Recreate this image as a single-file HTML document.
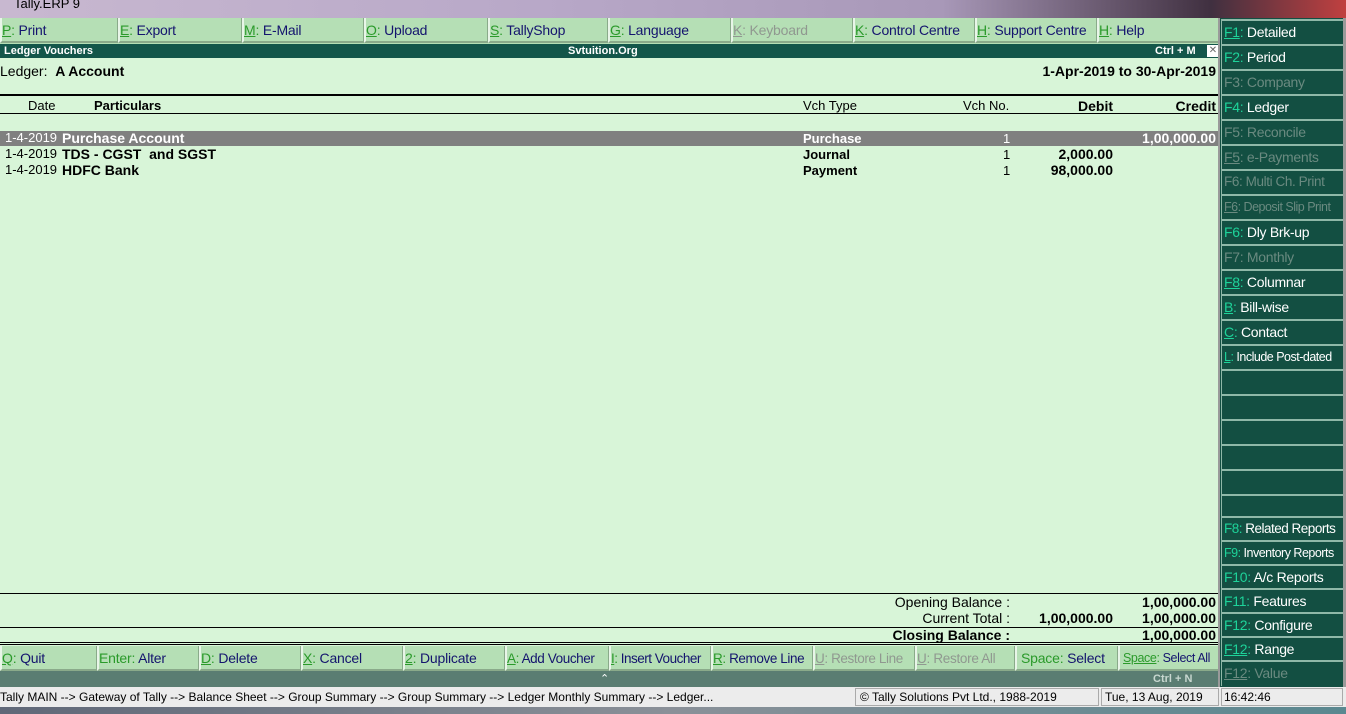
<!DOCTYPE html>
<html><head><meta charset="utf-8"><style>
*{margin:0;padding:0;box-sizing:border-box}
body{width:1346px;height:714px;overflow:hidden;position:relative;background:#d8f5d8;font-family:"Liberation Sans",Arial,sans-serif;font-size:13px;color:#000}
.a{position:absolute;white-space:nowrap}
.tb{position:absolute;height:25px;background:#b5dfb5;border-left:2px solid #e8f5e8;border-right:1px solid #8aaa8a;border-bottom:2px solid #8aaa8a;color:#14146e;font-size:14px;line-height:25px;padding-left:0px;white-space:nowrap;overflow:hidden;letter-spacing:-0.2px}
.tb b{color:#2a9a2a;font-weight:normal;text-decoration:underline}
.tb.g{color:#909890}.tb.g b{color:#909890}
.rp{position:absolute;left:1221px;width:122px;background:#134f42;border-top:2px solid #8fb8a8;border-left:1px solid #8fb8a8;color:#fff;font-size:14px;line-height:22px;padding-left:2px;white-space:nowrap;overflow:hidden;letter-spacing:-0.3px}
.rp b{color:#1ed39a;font-weight:normal}
.rp.g{color:#6a8a80}.rp.g b{color:#6a8a80}
.bold{font-weight:bold}
</style></head><body>
<div class="a" style="left:0;top:0;width:1346px;height:18px;background:linear-gradient(90deg,#c8b8d0,#b8a8c8 40%,#a898b8 70%,#403040 90%,#c04040);"></div>
<div class="a" style="left:14px;top:-3px;font-size:13px;line-height:14px;color:#000">Tally.ERP 9</div>
<div class="a" style="left:0;top:18px;width:1220px;height:26px;background:#b5dfb5"></div>
<div class="tb" style="left:0;top:18px;width:118px"><b>P</b><b style="text-decoration:none">:</b> Print</div>
<div class="tb" style="left:118px;top:18px;width:124px"><b>E</b><b style="text-decoration:none">:</b> Export</div>
<div class="tb" style="left:242px;top:18px;width:122px"><b>M</b><b style="text-decoration:none">:</b> E-Mail</div>
<div class="tb" style="left:364px;top:18px;width:124px"><b>O</b><b style="text-decoration:none">:</b> Upload</div>
<div class="tb" style="left:488px;top:18px;width:120px"><b>S</b><b style="text-decoration:none">:</b> TallyShop</div>
<div class="tb" style="left:608px;top:18px;width:123px"><b>G</b><b style="text-decoration:none">:</b> Language</div>
<div class="tb g" style="left:731px;top:18px;width:122px"><b>K</b><b style="text-decoration:none">:</b> Keyboard</div>
<div class="tb" style="left:853px;top:18px;width:122px"><b>K</b><b style="text-decoration:none">:</b> Control Centre</div>
<div class="tb" style="left:975px;top:18px;width:122px"><b>H</b><b style="text-decoration:none">:</b> Support Centre</div>
<div class="tb" style="left:1097px;top:18px;width:123px"><b>H</b><b style="text-decoration:none">:</b> Help</div>
<div class="a" style="left:0;top:44px;width:1220px;height:14px;background:#13564a"></div>
<div class="a bold" style="left:4px;top:44px;color:#fff;font-size:11px;line-height:14px">Ledger Vouchers</div>
<div class="a bold" style="left:568px;top:44px;color:#fff;font-size:11px;line-height:14px">Svtuition.Org</div>
<div class="a bold" style="left:1155px;top:44px;color:#fff;font-size:11px;line-height:14px">Ctrl + M</div>
<div class="a" style="left:1207px;top:45px;width:12px;height:12px;background:#fff;color:#666;font-size:10px;line-height:12px;text-align:center">✕</div>
<div class="a" style="left:0;top:63px;font-size:14px">Ledger:&nbsp; <b>A Account</b></div>
<div class="a bold" style="left:0;top:63px;font-size:14px;text-align:right;width:1216px">1-Apr-2019 to 30-Apr-2019</div>
<div class="a" style="left:0;top:94px;width:1220px;height:2px;background:#000"></div>
<div class="a" style="left:28px;top:98px;font-size:13px">Date</div>
<div class="a bold" style="left:94px;top:98px;font-size:13px">Particulars</div>
<div class="a" style="left:803px;top:98px">Vch Type</div>
<div class="a" style="left:963px;top:98px">Vch No.</div>
<div class="a bold" style="left:1000px;width:113px;top:98px;text-align:right;font-size:14px">Debit</div>
<div class="a bold" style="left:1100px;width:116px;top:98px;text-align:right;font-size:14px">Credit</div>
<div class="a" style="left:0;top:113px;width:1220px;height:1px;background:#000"></div>
<div class="a" style="left:0;top:131px;width:1220px;height:15px;background:#808080"></div>
<div class="a" style="left:5px;top:130px;color:#fff;font-size:13px">1-4-2019</div>
<div class="a bold" style="left:62px;top:130px;color:#fff;font-size:14px">Purchase Account</div>
<div class="a bold" style="left:803px;top:131px;color:#fff">Purchase</div>
<div class="a" style="left:1003px;top:131px;color:#fff">1</div>
<div class="a bold" style="left:1100px;width:116px;top:130px;text-align:right;color:#fff;font-size:14px">1,00,000.00</div>
<div class="a" style="left:5px;top:146px">1-4-2019</div>
<div class="a bold" style="left:62px;top:146px;font-size:14px">TDS - CGST &nbsp;and SGST</div>
<div class="a bold" style="left:803px;top:147px">Journal</div>
<div class="a" style="left:1003px;top:147px">1</div>
<div class="a bold" style="left:1000px;width:113px;top:146px;text-align:right;font-size:14px">2,000.00</div>
<div class="a" style="left:5px;top:162px">1-4-2019</div>
<div class="a bold" style="left:62px;top:162px;font-size:14px">HDFC Bank</div>
<div class="a bold" style="left:803px;top:163px">Payment</div>
<div class="a" style="left:1003px;top:163px">1</div>
<div class="a bold" style="left:1000px;width:113px;top:162px;text-align:right;font-size:14px">98,000.00</div>
<div class="a" style="left:0;top:593px;width:1220px;height:1px;background:#000"></div>
<div class="a" style="left:800px;width:210px;top:594px;text-align:right;font-size:14px">Opening Balance :</div>
<div class="a bold" style="left:1100px;width:116px;top:594px;text-align:right;font-size:14px">1,00,000.00</div>
<div class="a" style="left:800px;width:210px;top:610px;text-align:right;font-size:14px">Current Total :</div>
<div class="a bold" style="left:990px;width:123px;top:610px;text-align:right;font-size:14px">1,00,000.00</div>
<div class="a bold" style="left:1100px;width:116px;top:610px;text-align:right;font-size:14px">1,00,000.00</div>
<div class="a" style="left:0;top:627px;width:1220px;height:1px;background:#000"></div>
<div class="a bold" style="left:800px;width:210px;top:627px;text-align:right;font-size:14px">Closing Balance :</div>
<div class="a bold" style="left:1100px;width:116px;top:627px;text-align:right;font-size:14px">1,00,000.00</div>
<div class="a" style="left:0;top:642px;width:1220px;height:1px;background:#000"></div>
<div class="a" style="left:0;top:644px;width:1220px;height:1px;background:#000"></div>
<div class="a" style="left:0;top:646px;width:1220px;height:25px;background:#b5dfb5"></div>
<div class="tb" style="left:0;top:646px;width:97px"><b>Q</b><b style="text-decoration:none">:</b> Quit</div>
<div class="tb" style="left:97px;top:646px;width:102px"><b style="text-decoration:none">Enter:</b> Alter</div>
<div class="tb" style="left:199px;top:646px;width:102px"><b>D</b><b style="text-decoration:none">:</b> Delete</div>
<div class="tb" style="left:301px;top:646px;width:102px"><b>X</b><b style="text-decoration:none">:</b> Cancel</div>
<div class="tb" style="left:403px;top:646px;width:102px"><b>2</b><b style="text-decoration:none">:</b> Duplicate</div>
<div class="tb" style="left:505px;top:646px;width:104px;font-size:13.5px;letter-spacing:-0.4px"><b>A</b><b style="text-decoration:none">:</b> Add Voucher</div>
<div class="tb" style="left:609px;top:646px;width:102px;font-size:13.5px;letter-spacing:-0.5px"><b>I</b><b style="text-decoration:none">:</b> Insert Voucher</div>
<div class="tb" style="left:711px;top:646px;width:102px;font-size:13.5px;letter-spacing:-0.4px"><b>R</b><b style="text-decoration:none">:</b> Remove Line</div>
<div class="tb g" style="left:813px;top:646px;width:102px;font-size:13.5px;letter-spacing:-0.4px"><b>U</b><b style="text-decoration:none">:</b> Restore Line</div>
<div class="tb g" style="left:915px;top:646px;width:100px;font-size:13.5px;letter-spacing:-0.3px"><b>U</b><b style="text-decoration:none">:</b> Restore All</div>
<div class="tb" style="left:1015px;top:646px;width:103px;padding-left:4px"><b style="text-decoration:none">Space:</b> Select</div>
<div class="tb" style="left:1118px;top:646px;width:102px;font-size:12.5px;letter-spacing:-0.4px;padding-left:3px"><b>Space</b><b style="text-decoration:none">:</b> Select All</div>
<div class="a" style="left:0;top:671px;width:1220px;height:16px;background:#5a7d72"></div>
<div class="a" style="left:600px;top:671px;color:#fff;font-size:11px;line-height:16px">⌃</div>
<div class="a bold" style="left:1153px;top:672px;color:#c8d8d0;font-size:11px;line-height:14px">Ctrl + N</div>
<div class="a" style="left:0;top:687px;width:1346px;height:20px;background:#ececec"></div>
<div class="a" style="left:0;top:689px;font-size:12px;line-height:17px">Tally MAIN --&gt; Gateway of Tally --&gt; Balance Sheet --&gt; Group Summary --&gt; Group Summary --&gt; Ledger Monthly Summary --&gt; Ledger...</div>
<div class="a" style="left:855px;top:688px;width:244px;height:18px;border:1px solid #aaa;font-size:12px;line-height:16px;padding-left:4px">© Tally Solutions Pvt Ltd., 1988-2019</div>
<div class="a" style="left:1101px;top:688px;width:118px;height:18px;border:1px solid #aaa;font-size:12px;line-height:16px;padding-left:3px">Tue, 13 Aug, 2019</div>
<div class="a" style="left:1221px;top:688px;width:122px;height:18px;border:1px solid #aaa;font-size:12px;line-height:16px;padding-left:2px">16:42:46</div>
<div class="a" style="left:0;top:707px;width:1346px;height:7px;background:linear-gradient(90deg,#606878,#8a9098 50%,#5a8890)"></div>
<div class="a" style="left:1218px;top:18px;width:128px;height:669px;background:#134f42;border-left:2px solid #9a9a9a;border-right:3px solid #9a9a9a"></div>
<div class="rp" style="top:19px;height:25px"><b><u>F1</u>:</b> Detailed</div>
<div class="rp" style="top:44px;height:25px"><b>F2:</b> Period</div>
<div class="rp g" style="top:69px;height:25px"><b>F3:</b> Company</div>
<div class="rp" style="top:94px;height:25px"><b>F4:</b> Ledger</div>
<div class="rp g" style="top:119px;height:25px"><b>F5:</b> Reconcile</div>
<div class="rp g" style="top:144px;height:25px"><b><u>F5</u>:</b> e-Payments</div>
<div class="rp g" style="top:169px;height:25px;font-size:13.5px;letter-spacing:-0.4px"><b>F6:</b> Multi Ch. Print</div>
<div class="rp g" style="top:194px;height:25px;font-size:12.5px;letter-spacing:-0.5px"><b><u>F6</u>:</b> Deposit Slip Print</div>
<div class="rp" style="top:219px;height:25px"><b>F6:</b> Dly Brk-up</div>
<div class="rp g" style="top:244px;height:25px"><b>F7:</b> Monthly</div>
<div class="rp" style="top:269px;height:25px"><b><u>F8</u>:</b> Columnar</div>
<div class="rp" style="top:294px;height:25px"><b><u>B</u>:</b> Bill-wise</div>
<div class="rp" style="top:319px;height:25px"><b><u>C</u>:</b> Contact</div>
<div class="rp" style="top:344px;height:25px;font-size:12.5px;letter-spacing:-0.5px"><b><u>L</u>:</b> Include Post-dated</div>
<div class="rp" style="top:369px;height:25px"></div>
<div class="rp" style="top:394px;height:25px"></div>
<div class="rp" style="top:419px;height:25px"></div>
<div class="rp" style="top:444px;height:25px"></div>
<div class="rp" style="top:469px;height:25px"></div>
<div class="rp" style="top:494px;height:22px"></div>
<div class="rp" style="top:516px;height:24px;font-size:13.5px;letter-spacing:-0.5px"><b>F8:</b> Related Reports</div>
<div class="rp" style="top:540px;height:24px;font-size:12.5px;letter-spacing:-0.5px"><b>F9:</b> Inventory Reports</div>
<div class="rp" style="top:564px;height:24px"><b>F10:</b> A/c Reports</div>
<div class="rp" style="top:588px;height:24px"><b>F11:</b> Features</div>
<div class="rp" style="top:612px;height:24px"><b>F12:</b> Configure</div>
<div class="rp" style="top:636px;height:24px"><b><u>F12</u>:</b> Range</div>
<div class="rp g" style="top:660px;height:26px"><b><u>F12</u>:</b> Value</div>
</body></html>
